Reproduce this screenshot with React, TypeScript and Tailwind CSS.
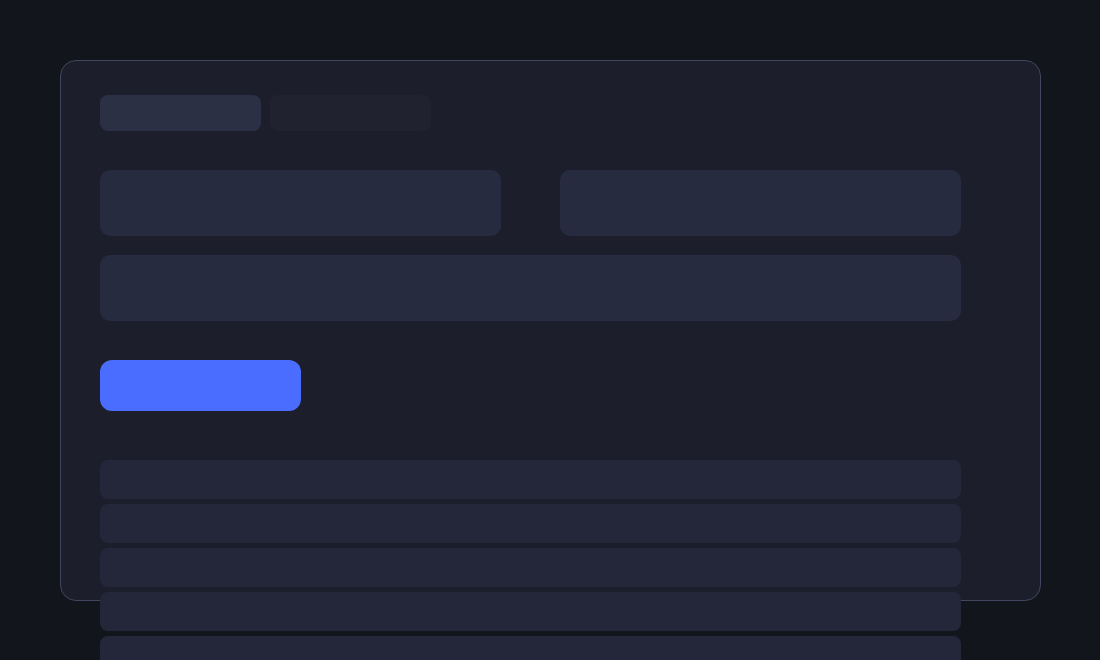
export default function App() {
  const rows = [0, 1, 2, 3, 4];
  return (
    <div className="w-[1100px] h-[660px] overflow-hidden bg-[#13151c] pt-[60px] pl-[60px]" style={{ fontFamily: '"Liberation Sans", sans-serif' }}>
      <div className="box-border w-[981px] h-[541px] rounded-[16px] border border-[#42465f] bg-[#1c1e2b] pl-[39px] pt-[34px]">
        <div className="flex gap-[9px]">
          <div className="w-[161px] h-[36px] rounded-[8px] bg-[#2c3044]" />
          <div className="w-[161px] h-[36px] rounded-[8px] bg-[#20222f]" />
        </div>
        <div className="mt-[39px] flex flex-col gap-[19px] w-[861px]">
          <div className="flex justify-between">
            <div className="w-[401px] h-[66px] rounded-[10px] bg-[#272b3f]" />
            <div className="w-[401px] h-[66px] rounded-[10px] bg-[#272b3f]" />
          </div>
          <div className="w-[861px] h-[66px] rounded-[10px] bg-[#272b3f]" />
        </div>
        <div className="mt-[39px] w-[201px] h-[51px] rounded-[12px] bg-[#4a6dff]" />
        <div className="mt-[49px] flex flex-col gap-[5px] w-[861px]">
          {rows.map((r) => (
            <div key={r} className="h-[39px] rounded-[8px] bg-[#24273a]" />
          ))}
        </div>
      </div>
    </div>
  );
}
